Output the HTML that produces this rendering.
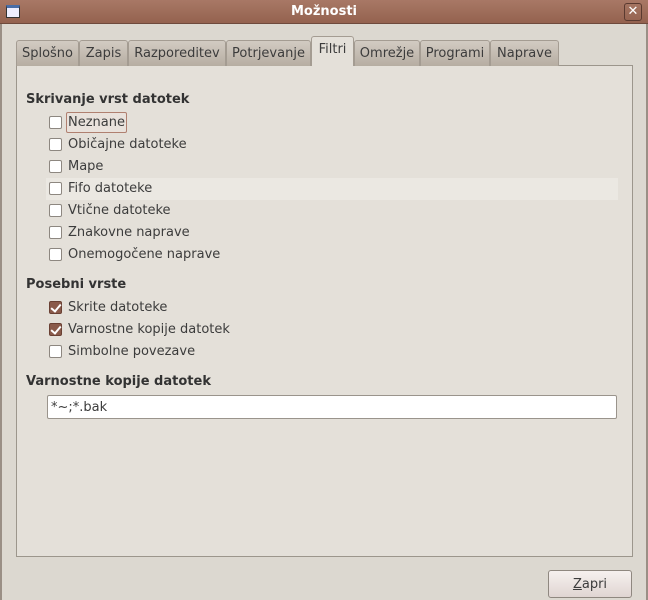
<!DOCTYPE html>
<html><head><meta charset="utf-8"><style>
*{box-sizing:border-box;margin:0;padding:0}
body{width:648px;height:600px;overflow:hidden;background:#dcd8d0;font-family:"DejaVu Sans","Liberation Sans",sans-serif;font-size:13px;color:#3c3c3c;position:relative}
.title{position:absolute;left:0;top:0;width:648px;height:24px;background:linear-gradient(#a87866,#94624f);border-bottom:1px solid #6e4a3c}
.title .t{position:absolute;left:0;right:0;top:4px;text-align:center;color:#fff;font-weight:bold;font-size:13px}
.ico{position:absolute;left:6px;top:5px;width:14px;height:13px;border:1px solid #333;background:#eef;border-top:3px solid #4a6ea8}
.cls{position:absolute;left:624px;top:3px;width:18px;height:18px;border:1px solid #5a3a30;border-radius:3px;color:#fff;font-size:13px;text-align:center;line-height:16px;font-weight:bold}
.lb{position:absolute;left:0;top:24px;width:2px;height:576px;background:#9a8f85}
.rb{position:absolute;right:0;top:24px;width:2px;height:576px;background:#9a8f85}
.panel{position:absolute;left:16px;top:65px;width:617px;height:492px;background:#e4e0d9;border:1px solid #9c968c}
.tab{position:absolute;top:40px;height:26px;background:linear-gradient(#d2cbc2,#b6ada2);border:1px solid #a49c92;border-bottom:none;border-radius:3px 3px 0 0;font-size:13px;text-align:center;line-height:25px;color:#3c3c3c}
.tab.a{top:36px;height:30px;background:#e4e0d9;line-height:25px;z-index:2}
.h{position:absolute;left:26px;font-weight:bold;font-size:13px;color:#333}
.cb{position:absolute;left:49px;width:13px;height:13px;border:1px solid #8d8780;border-radius:2px;background:#fff}
.cb.c{background:#8a5a4a;border-color:#6a4033}
.cb.c:after{content:"";position:absolute;left:3px;top:0px;width:4px;height:8px;border:solid #fff;border-width:0 2px 2px 0;transform:rotate(40deg)}
.l{position:absolute;left:68px;font-size:13px}
.entry{position:absolute;left:47px;top:395px;width:570px;height:24px;background:#fff;border:1px solid #9a948c;border-radius:2px;padding:4px 3px;font-size:13px}
.btn{position:absolute;left:548px;top:570px;width:84px;height:28px;border:1px solid #8f8880;border-radius:3px;background:linear-gradient(#f6f1ef,#e0d5d2);text-align:center;line-height:27px;font-size:13px}
</style></head><body>
<div class="title"><div class="ico"></div><div class="t">Možnosti</div><div class="cls">✕</div></div>
<div class="lb"></div><div class="rb"></div>
<div class="panel"></div>
<div class="tab" style="left:16px;width:63px">Splošno</div>
<div class="tab" style="left:79px;width:49px">Zapis</div>
<div class="tab" style="left:128px;width:98px">Razporeditev</div>
<div class="tab" style="left:226px;width:85px">Potrjevanje</div>
<div class="tab a" style="left:311px;width:43px">Filtri</div>
<div class="tab" style="left:354px;width:66px">Omrežje</div>
<div class="tab" style="left:420px;width:70px">Programi</div>
<div class="tab" style="left:490px;width:69px">Naprave</div>
<div class="h" style="top:92px">Skrivanje vrst datotek</div>
<div style="position:absolute;left:46px;top:178px;width:572px;height:22px;background:#ebe8e2"></div>
<div style="position:absolute;left:66px;top:112px;width:61px;height:21px;border:1px solid #b08070;border-radius:2px;background:#e9e2dc"></div>
<div class="cb" style="top:116px"></div><div class="l" style="top:115px">Neznane</div>
<div class="cb" style="top:138px"></div><div class="l" style="top:137px">Običajne datoteke</div>
<div class="cb" style="top:160px"></div><div class="l" style="top:159px">Mape</div>
<div class="cb" style="top:182px"></div><div class="l" style="top:181px">Fifo datoteke</div>
<div class="cb" style="top:204px"></div><div class="l" style="top:203px">Vtične datoteke</div>
<div class="cb" style="top:226px"></div><div class="l" style="top:225px">Znakovne naprave</div>
<div class="cb" style="top:248px"></div><div class="l" style="top:247px">Onemogočene naprave</div>
<div class="h" style="top:277px">Posebni vrste</div>
<div class="cb c" style="top:301px"></div><div class="l" style="top:300px">Skrite datoteke</div>
<div class="cb c" style="top:323px"></div><div class="l" style="top:322px">Varnostne kopije datotek</div>
<div class="cb" style="top:345px"></div><div class="l" style="top:344px">Simbolne povezave</div>
<div class="h" style="top:374px">Varnostne kopije datotek</div>
<div class="entry">*~;*.bak</div>
<div class="btn"><u>Z</u>apri</div>
</body></html>
